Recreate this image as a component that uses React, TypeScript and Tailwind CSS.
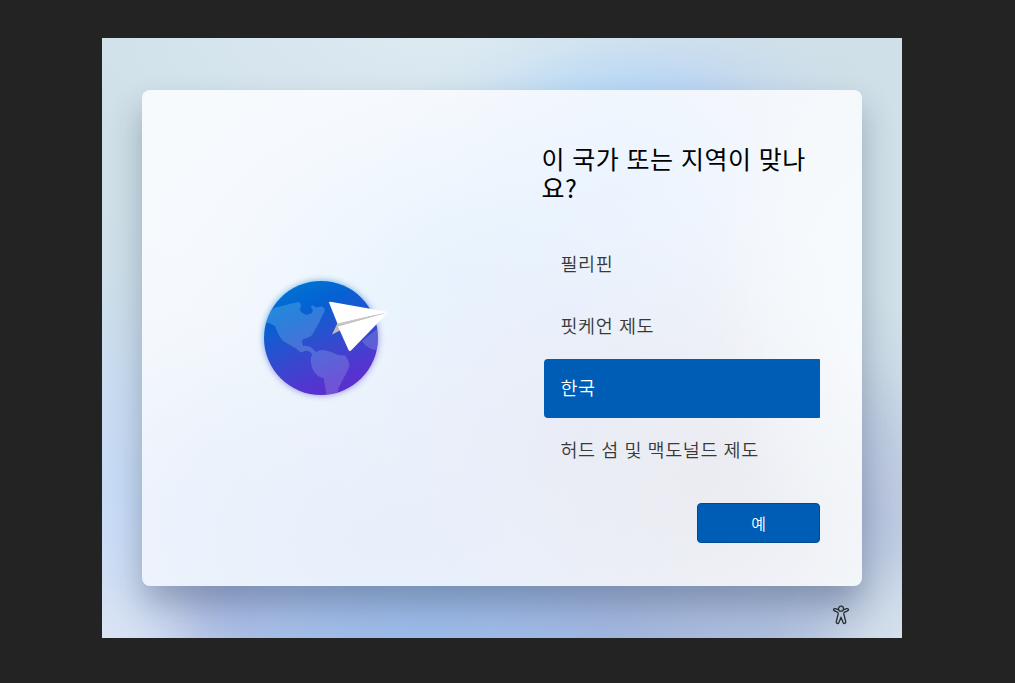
const regions = ["필리핀", "핏케언 제도", "한국", "허드 섬 및 맥도널드 제도"];
const selected = "한국";

function Globe() {
  return (
    <svg width="150" height="145" viewBox="0 0 150 145" className="block">
      <defs>
        <linearGradient id="ocean" x1="0.3" y1="0" x2="0.72" y2="1">
          <stop offset="0" stopColor="#0074d2" />
          <stop offset="0.22" stopColor="#0462d2" />
          <stop offset="0.5" stopColor="#2c4fce" />
          <stop offset="0.85" stopColor="#5633d0" />
          <stop offset="1" stopColor="#5b2fcb" />
        </linearGradient>
        <clipPath id="disc">
          <circle cx="71" cy="73" r="57" />
        </clipPath>
        <linearGradient id="land" x1="0" y1="0" x2="0.5" y2="1">
          <stop offset="0" stopColor="#5ec4ee" stopOpacity="0.36" />
          <stop offset="1" stopColor="#b6c0f0" stopOpacity="0.24" />
        </linearGradient>
        <filter id="glow" x="-20%" y="-20%" width="140%" height="140%">
          <feGaussianBlur stdDeviation="3" />
        </filter>
      </defs>
      <circle cx="71" cy="73" r="57.5" fill="url(#ocean)" opacity="0.5" filter="url(#glow)" />
      <circle cx="71" cy="73" r="57" fill="url(#ocean)" />
      <g clipPath="url(#disc)">
        <path
          fill="url(#land)"
          d="M12 54 L24 43 L47.500 37 Q51 37 51 40 L50 44 Q50 47 53 48 L56 50 L62 48 L63 45 Q60 42 62 40.500 Q64 40 65.500 42.500 L72 41.500 Q75.500 43 74.500 46 Q69 59 62 70 Q59 73 53 74 L52 76 L53 81 Q58 80 62 83 L66 87 Q71 84 76 85.500 Q83 87 88 90 L95 90.500 Q98 94 99.500 100 Q98 106 93 114 Q88 122 86.500 132 L77 132 L73.500 113 Q67 112 63 105 Q60 98 61 92 L62.500 89.500 Q60 86 56 85.500 L51 87.500 L46 83.500 L33 76 Q28 70 25 61 L19 58 L12 58 Z"
        />
        <path fill="#b6c0f0" fillOpacity="0.24" d="M131 61 L112 76 Q117 85 131 86 Z" />
      </g>
      <path d="M82 69.500 L87.500 58 L137.500 47.500 L95 63.500 L89 66 Z" fill="#bdbdbd" />
      <path d="M79 37.500 Q79 36.500 80.500 36.700 L137 46.700 Q138.500 47 137 47.500 L87.500 58.700 Z" fill="#fff" />
      <path d="M88 61.500 L138 47.500 L101.500 85 Q99.500 87 98.500 85 Z" fill="#fff" />
      <path d="M87.500 58.500 L136 47.500 L88 60.800 Z" fill="#c6c6c6" />
    </svg>
  );
}

function AccessibilityIcon() {
  return (
    <svg width="18" height="20" viewBox="0 0 18 20" fill="none" stroke="#292e33" strokeWidth="1.300" strokeLinejoin="round" className="block">
      <circle cx="9" cy="3.700" r="2.500" />
      <path d="M6.600 4.700 L3.300 3.700 C1.500 3.300 .8 5.200 2.400 5.900 L5.500 7.200 C6.200 7.500 6.300 8.200 6.200 9 L4.300 16.500 C3.900 18.600 6.200 19.200 6.900 17.400 L9 12.200 L11.100 17.400 C11.800 19.200 14.100 18.600 13.700 16.500 L11.800 9 C11.700 8.200 11.800 7.500 12.500 7.200 L15.600 5.900 C17.200 5.200 16.500 3.300 14.700 3.700 L11.400 4.700" />
    </svg>
  );
}

export default function App() {
  return (
    <div className="flex h-[683px] w-[1015px] overflow-hidden bg-[#232323] pt-[38px] pl-[102px] font-['Noto_Sans_CJK_KR',sans-serif]">
      <div className="flex h-[600px] w-[800px] flex-col overflow-hidden bg-[#cfe0e8] bg-[radial-gradient(circle_150px_at_820px_620px,#dbe6ee,#dbe6ee88_45%,#dbe6ee22_75%,transparent),radial-gradient(circle_150px_at_-10px_610px,#dde6f5,#dde6f588_40%,#dde6f522_75%,transparent),radial-gradient(ellipse_100px_290px_at_10px_470px,#c8dcf8,#c6daf699_45%,#c6daf622_80%,transparent),radial-gradient(ellipse_200px_110px_at_500px_90px,#addafb,#addafb66_45%,#addafb18_75%,transparent),radial-gradient(ellipse_220px_125px_at_570px_80px,#b4cdf5,#b9cff366_45%,#c0d0f018_75%,transparent),radial-gradient(ellipse_420px_150px_at_330px_0px,#dceaf2,#dceaf288_50%,#dceaf222_80%,transparent),radial-gradient(ellipse_280px_190px_at_310px_620px,#9abaea,#9abaeaaa_40%,#9abaea33_75%,transparent),radial-gradient(ellipse_420px_190px_at_490px_600px,#a2b4dc,#a5b6dbcc_40%,#a8badb44_75%,transparent),radial-gradient(ellipse_260px_240px_at_120px_560px,#b0bae2,#b6c3e5aa_45%,#bccbe733_75%,transparent),radial-gradient(ellipse_150px_230px_at_740px_480px,#b2bddb,#b5c1dcaa_45%,#b8c5dd33_75%,transparent)] pt-[52px] pl-10">
        <main className="flex h-[496px] w-[720px] shrink-0 rounded-lg bg-[#f5f8fb] bg-[radial-gradient(ellipse_170px_290px_at_740px_210px,#f8fbfd,#f8fbfd77_50%,transparent),radial-gradient(ellipse_280px_260px_at_560px_390px,#ebecf2,#ebecf288_45%,#ebecf222_75%,transparent),radial-gradient(ellipse_300px_280px_at_440px_340px,#e8edf9,#e8edf977_45%,#e8edf922_75%,transparent),radial-gradient(ellipse_360px_240px_at_330px_190px,#e7f3fe,#e9f4fe88_45%,#ebf5fe22_75%,transparent),radial-gradient(ellipse_260px_240px_at_480px_90px,#edf4ff,#eff5fe88_45%,#eff5fe22_75%,transparent),radial-gradient(ellipse_400px_290px_at_240px_450px,#e7effb,#e8f0fbaa_50%,#ebf2fc33_80%,transparent),radial-gradient(ellipse_240px_210px_at_0px_430px,#f2f5ff,transparent),radial-gradient(ellipse_480px_320px_at_130px_30px,#f7fafd_30%,transparent)] pr-[42px] pl-[114px] shadow-[0_18px_32px_rgba(20,40,70,0.30)]">
          <div className="pt-[175px]">
            <div className="-mr-2 -ml-1.5 h-[145px] w-[150px]">
              <Globe />
            </div>
          </div>
          <section className="ml-auto flex w-[278px] flex-col">
            <h1 className="mt-[54px] -ml-[0.5px] h-[59px] text-[25px] leading-[29px] font-normal tracking-[0.5px] text-black [word-spacing:1.2px]">이 국가 또는 지역이 맞나요?</h1>
            <ul className="mt-[32px] ml-[2px] flex flex-col gap-[3px]">
              {regions.map((name) => (
                <li
                  key={name}
                  className={
                    name === selected
                      ? "flex h-[59px] items-center rounded-l-[4px] rounded-r-[1px] bg-[#005db5] pb-[3px] pl-[16.5px] text-[18.5px] font-[350] tracking-[0.6px] text-white [word-spacing:0.8px]"
                      : "flex h-[59px] items-center pb-[3px] pl-[16.5px] text-[18.5px] font-[350] tracking-[0.6px] text-[#383838] [word-spacing:0.8px]"
                  }
                >
                  <span className="leading-[27px]">{name}</span>
                </li>
              ))}
            </ul>
            <button className="mt-[23px] flex h-10 w-[123px] items-center justify-center self-end rounded-[4px] border border-[#004a90] bg-[#005db5] text-base font-[350] text-white">
              예
            </button>
          </section>
        </main>
        <div className="mt-[19px] mr-[52px] self-end">
          <AccessibilityIcon />
        </div>
      </div>
    </div>
  );
}
